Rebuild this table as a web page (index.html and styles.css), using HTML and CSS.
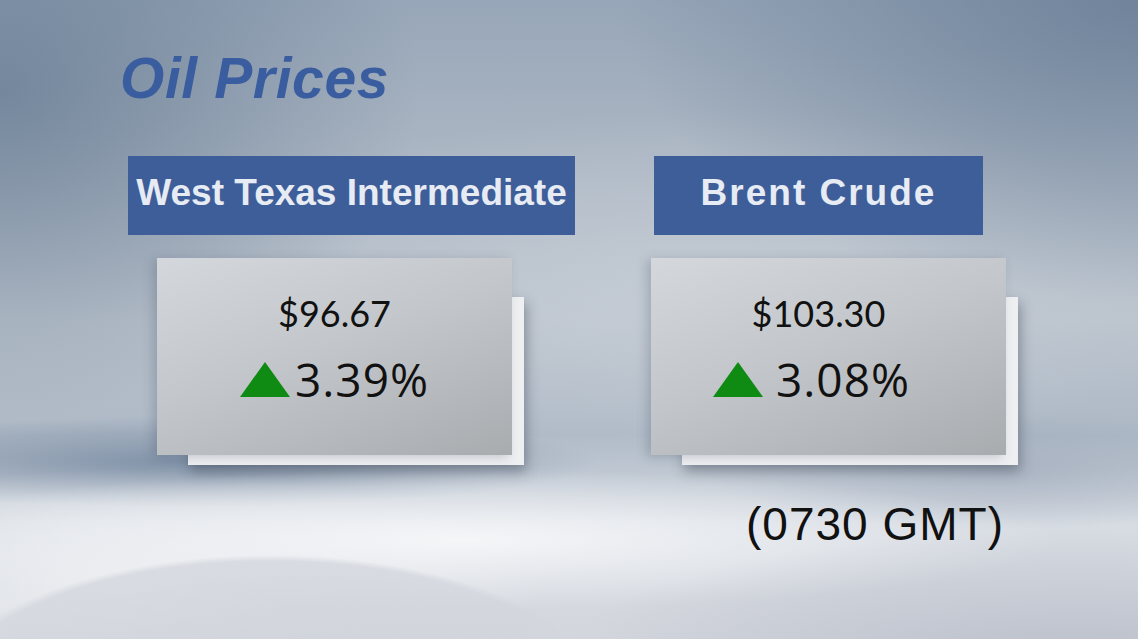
FILE: index.html
```html
<!DOCTYPE html>
<html>
<head>
<meta charset="utf-8">
<link rel="stylesheet" href="styles.css">
</head>
<body>
<main class="slide">
  <h1 class="title">Oil Prices</h1>
  <div class="grid">
    <section class="col col-wti">
      <div class="header">West Texas Intermediate</div>
      <div class="card card-wti">
        <div class="price">$96.67</div>
        <div class="change"><span class="tri"></span><span class="pct">3.39%</span></div>
      </div>
    </section>
    <section class="col col-brent">
      <div class="header header-brent">Brent Crude</div>
      <div class="card card-brent">
        <div class="price">$103.30</div>
        <div class="change"><span class="tri"></span><span class="pct">3.08%</span></div>
      </div>
      <div class="time">(0730 GMT)</div>
    </section>
  </div>
</main>
</body>
</html>
```
FILE: styles.css
```css
html, body { margin: 0; padding: 0; }
body { width: 1138px; height: 639px; overflow: hidden; }

.slide {
  position: relative;
  z-index: 0;
  width: 1138px;
  height: 639px;
  box-sizing: border-box;
  overflow: hidden;
  background:
    radial-gradient(ellipse 340px 150px at 270px 705px, rgba(204,208,216,0.85) 0%, rgba(210,213,220,0.75) 96%, rgba(210,213,220,0) 100%),
    radial-gradient(ellipse 520px 130px at 1080px 660px, rgba(182,188,200,0.85), rgba(182,188,200,0) 100%),
    radial-gradient(ellipse 600px 70px at 460px 540px, rgba(246,247,249,0.95), rgba(246,247,249,0) 100%),
    radial-gradient(ellipse 420px 120px at 120px 590px, rgba(236,238,241,0.95), rgba(236,238,241,0) 100%),
    radial-gradient(ellipse 420px 45px at 180px 462px, rgba(110,130,155,0.75), rgba(110,130,155,0) 100%),
    radial-gradient(ellipse 300px 60px at 1000px 470px, rgba(150,162,180,0.5), rgba(150,162,180,0) 100%),
    radial-gradient(ellipse 520px 300px at 1138px 0px, rgba(105,125,150,0.85), rgba(105,125,150,0) 100%),
    radial-gradient(ellipse 420px 330px at 0px 90px, rgba(105,125,148,0.8), rgba(105,125,148,0) 100%),
    radial-gradient(ellipse 500px 180px at 700px 290px, rgba(200,207,215,0.7), rgba(200,207,215,0) 100%),
    linear-gradient(180deg, #97a6b8 0%, #abb6c3 25%, #bcc4ce 50%, #aeb9c6 68%, #d7dce3 82%, #d3d6dd 100%);
  font-family: "Liberation Sans", Arial, sans-serif;
}

.title {
  margin: 0;
  padding: 50px 0 0 120px;
  font-family: "Liberation Sans", Arial, sans-serif;
  font-weight: bold;
  font-style: italic;
  font-size: 57px;
  line-height: 56px;
  color: #3a5d9f;
  letter-spacing: 0.6px;
}

.grid {
  display: grid;
  grid-template-columns: 447px 367px;
  column-gap: 76px;
  padding: 50px 0 0 128px;
}

.col { display: flex; flex-direction: column; align-items: flex-start; }

.header {
  height: 79px;
  box-sizing: border-box;
  padding-bottom: 6px;
  line-height: 73px;
  background: #3e5e9a;
  color: #e7ebf3;
  font-weight: bold;
  font-size: 37px;
  text-align: center;
  white-space: nowrap;
}
.col-wti .header { width: 447px; }
.header-brent { width: 329px; margin-left: 3px; letter-spacing: 2px; }

.card {
  position: relative;
  width: 355px;
  height: 197px;
  margin-top: 23px;
  box-sizing: border-box;
  padding-top: 37px;
  background: linear-gradient(160deg, #d4d8dc 0%, #c3c7cb 45%, #a9acaf 100%);
  box-shadow: -4px 2px 10px rgba(60,75,95,0.25);
  display: flex;
  flex-direction: column;
  align-items: center;
}
.card::before {
  content: "";
  position: absolute;
  left: 31px;
  top: 39px;
  width: 336px;
  height: 168px;
  background: #eeeff1;
  box-shadow: 2px 6px 12px rgba(50,60,75,0.45);
  z-index: -1;
}
.card-wti { margin-left: 29px; }
.card-brent { padding-right: 20px; }

.price {
  font-family: Lato, "Open Sans", sans-serif;
  font-size: 36px;
  line-height: 36px;
  color: #111;
}

.change {
  margin-top: 25px;
  display: flex;
  align-items: flex-end;
  gap: 5px;
}
.card-brent .change { gap: 13px; margin-right: 14px; }

.tri {
  width: 0;
  height: 0;
  border-left: 25px solid transparent;
  border-right: 25px solid transparent;
  border-bottom: 35px solid #0f8a12;
  margin-bottom: 5px;
}

.pct {
  font-family: "Open Sans", sans-serif;
  font-size: 46px;
  line-height: 46px;
  color: #111;
  letter-spacing: 1px;
}

.time {
  margin: 46px 0 0 95px;
  font-size: 46px;
  line-height: 46px;
  letter-spacing: 1px;
  color: #111;
  white-space: nowrap;
}
```
